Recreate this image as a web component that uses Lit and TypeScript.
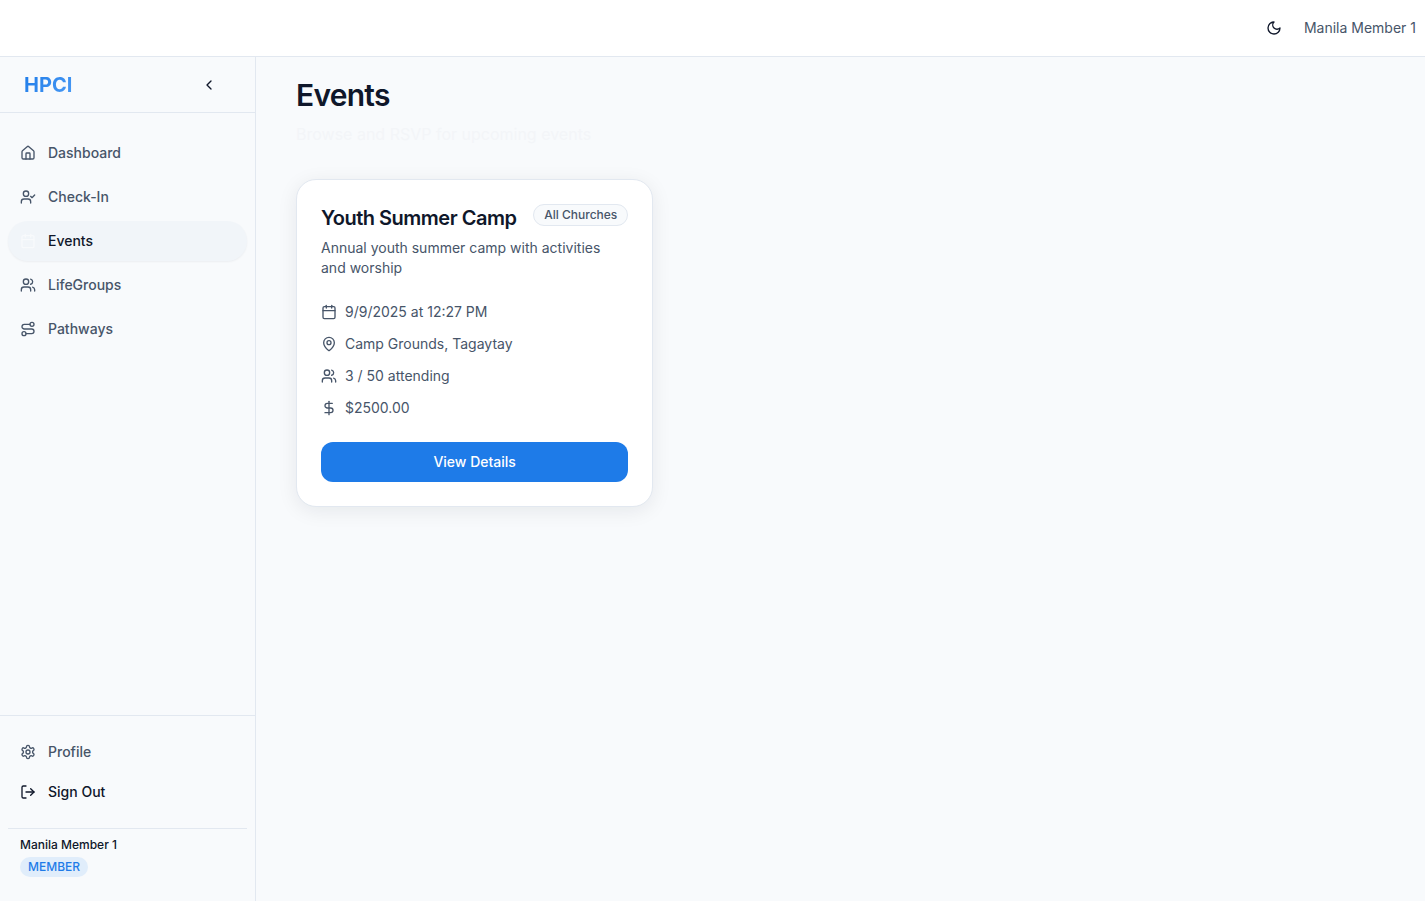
import { LitElement, html, css, svg } from "lit";
import { customElement, property, state } from "lit/decorators.js";

const icons: Record<string, unknown> = {
  house: svg`<path d="M15 21v-8a1 1 0 0 0-1-1h-4a1 1 0 0 0-1 1v8"/><path d="M3 10a2 2 0 0 1 .709-1.528l7-5.999a2 2 0 0 1 2.582 0l7 5.999A2 2 0 0 1 21 10v9a2 2 0 0 1-2 2H5a2 2 0 0 1-2-2z"/>`,
  userCheck: svg`<path d="m16 11 2 2 4-4"/><path d="M16 21v-2a4 4 0 0 0-4-4H6a4 4 0 0 0-4 4v2"/><circle cx="9" cy="7" r="4"/>`,
  calendar: svg`<path d="M8 2v4"/><path d="M16 2v4"/><rect width="18" height="18" x="3" y="4" rx="2"/><path d="M3 10h18"/>`,
  users: svg`<path d="M16 21v-2a4 4 0 0 0-4-4H6a4 4 0 0 0-4 4v2"/><circle cx="9" cy="7" r="4"/><path d="M22 21v-2a4 4 0 0 0-3-3.87"/><path d="M16 3.13a4 4 0 0 1 0 7.75"/>`,
  route: svg`<circle cx="6" cy="19" r="3"/><path d="M9 19h8.5a3.5 3.5 0 0 0 0-7h-11a3.5 3.5 0 0 1 0-7H15"/><circle cx="18" cy="5" r="3"/>`,
  settings: svg`<path d="M12.22 2h-.44a2 2 0 0 0-2 2v.18a2 2 0 0 1-1 1.73l-.43.25a2 2 0 0 1-2 0l-.15-.08a2 2 0 0 0-2.73.73l-.22.38a2 2 0 0 0 .73 2.73l.15.1a2 2 0 0 1 1 1.72v.51a2 2 0 0 1-1 1.74l-.15.09a2 2 0 0 0-.73 2.73l.22.38a2 2 0 0 0 2.73.73l.15-.08a2 2 0 0 1 2 0l.43.25a2 2 0 0 1 1 1.73V20a2 2 0 0 0 2 2h.44a2 2 0 0 0 2-2v-.18a2 2 0 0 1 1-1.73l.43-.25a2 2 0 0 1 2 0l.15.08a2 2 0 0 0 2.73-.73l.22-.39a2 2 0 0 0-.73-2.73l-.15-.08a2 2 0 0 1-1-1.74v-.5a2 2 0 0 1 1-1.74l.15-.09a2 2 0 0 0 .73-2.73l-.22-.38a2 2 0 0 0-2.73-.73l-.15.08a2 2 0 0 1-2 0l-.43-.25a2 2 0 0 1-1-1.73V4a2 2 0 0 0-2-2z"/><circle cx="12" cy="12" r="3"/>`,
  logOut: svg`<path d="m16 17 5-5-5-5"/><path d="M21 12H9"/><path d="M9 21H5a2 2 0 0 1-2-2V5a2 2 0 0 1 2-2h4"/>`,
  chevronLeft: svg`<path d="m15 18-6-6 6-6"/>`,
  moon: svg`<path d="M12 3a6 6 0 0 0 9 9 9 9 0 1 1-9-9Z"/>`,
  mapPin: svg`<path d="M20 10c0 4.993-5.539 10.193-7.399 11.799a1 1 0 0 1-1.202 0C9.539 20.193 4 14.993 4 10a8 8 0 0 1 16 0"/><circle cx="12" cy="10" r="3"/>`,
  dollar: svg`<path d="M12 2v20"/><path d="M17 5H9.5a3.5 3.5 0 0 0 0 7h5a3.5 3.5 0 0 1 0 7H6"/>`,
};

@customElement("ui-icon")
class UiIcon extends LitElement {
  @property() name = "";

  static styles = css`
    :host {
      display: block;
      flex: none;
      width: 16px;
      height: 16px;
    }
    .glyph {
      display: block;
      width: 100%;
      height: 100%;
      fill: none;
      stroke: currentColor;
      stroke-width: 2;
      stroke-linecap: round;
      stroke-linejoin: round;
    }
  `;

  render() {
    return html`<svg class="glyph" viewBox="0 0 24 24" aria-hidden="true">${icons[this.name]}</svg>`;
  }
}

interface ChurchEvent {
  title: string;
  scope: string;
  description: string;
  details: { icon: string; text: string }[];
}

@customElement("event-card")
class EventCard extends LitElement {
  @property({ attribute: false }) event!: ChurchEvent;

  static styles = css`
    :host {
      display: block;
    }
    .card {
      box-sizing: border-box;
      padding: 24px;
      background: #ffffff;
      border: 1px solid #e2e8f0;
      border-radius: 20px;
      box-shadow: 0 4px 20px rgba(15, 23, 42, 0.08);
      font-size: 14px;
      line-height: 20px;
      color: #475569;
    }
    .head {
      display: flex;
      justify-content: space-between;
      align-items: flex-start;
      gap: 8px;
    }
    .title {
      margin: 0;
      font-size: 20px;
      line-height: 28px;
      font-weight: 600;
      letter-spacing: -0.025em;
      color: #0f172a;
    }
    .scope {
      flex: none;
      padding: 2px 10px;
      font-size: 12px;
      line-height: 16px;
      font-weight: 500;
      background: #f8fafc;
      border: 1px solid #e2e8f0;
      border-radius: 11px;
    }
    .description {
      margin: 6px 0 24px;
    }
    .details {
      display: grid;
      gap: 12px;
      margin: 0 0 24px;
      padding: 0;
      list-style: none;
    }
    .detail {
      display: flex;
      align-items: center;
      gap: 8px;
    }
    .action {
      width: 100%;
      height: 40px;
      padding: 0 16px;
      border: 0;
      border-radius: 12px;
      background: #1e7be8;
      color: #ffffff;
      font: inherit;
      font-weight: 500;
      cursor: pointer;
    }
  `;

  render() {
    const { title, scope, description, details } = this.event;
    return html`
      <article class="card">
        <div class="head">
          <h2 class="title">${title}</h2>
          <span class="scope">${scope}</span>
        </div>
        <p class="description">${description}</p>
        <ul class="details">
          ${details.map(
            (d) => html`<li class="detail"><ui-icon name=${d.icon}></ui-icon><span>${d.text}</span></li>`
          )}
        </ul>
        <button class="action" type="button">View Details</button>
      </article>
    `;
  }
}

@customElement("app-root")
class AppRoot extends LitElement {
  @state() private current = "Events";

  private links = [
    { label: "Dashboard", icon: "house" },
    { label: "Check-In", icon: "userCheck" },
    { label: "Events", icon: "calendar" },
    { label: "LifeGroups", icon: "users" },
    { label: "Pathways", icon: "route" },
  ];

  private events: ChurchEvent[] = [
    {
      title: "Youth Summer Camp",
      scope: "All Churches",
      description: "Annual youth summer camp with activities and worship",
      details: [
        { icon: "calendar", text: "9/9/2025 at 12:27 PM" },
        { icon: "mapPin", text: "Camp Grounds, Tagaytay" },
        { icon: "users", text: "3 / 50 attending" },
        { icon: "dollar", text: "$2500.00" },
      ],
    },
  ];

  static styles = css`
    :host {
      display: flex;
      flex-direction: column;
      min-height: 100vh;
      background: #f8fafc;
      color: #0f172a;
      font-family: Inter, sans-serif;
      font-size: 14px;
      line-height: 20px;
    }
    .topbar {
      display: flex;
      justify-content: flex-end;
      align-items: center;
      gap: 8px;
      height: 56px;
      padding-right: 9px;
      background: #ffffff;
      border-bottom: 1px solid #e2e8f0;
      color: #475569;
    }
    .icon-button {
      display: grid;
      place-items: center;
      width: 44px;
      height: 40px;
      padding: 0;
      border: 0;
      background: none;
      color: #0f172a;
      cursor: pointer;
    }
    .body {
      flex: 1;
      display: flex;
    }
    .sidebar {
      box-sizing: border-box;
      flex: none;
      display: flex;
      flex-direction: column;
      width: 256px;
      border-right: 1px solid #e2e8f0;
    }
    .brand-row {
      display: flex;
      justify-content: space-between;
      align-items: center;
      height: 55px;
      padding: 0 24px;
      border-bottom: 1px solid #e2e8f0;
    }
    .brand {
      font-size: 20px;
      line-height: 28px;
      font-weight: 700;
      background: linear-gradient(135deg, #1e7be8, #4b9bf5);
      background-clip: text;
      -webkit-background-clip: text;
      color: transparent;
    }
    .nav {
      flex: 1;
      display: flex;
      flex-direction: column;
      gap: 4px;
      padding: 20px 8px;
    }
    .item {
      display: flex;
      align-items: center;
      gap: 12px;
      height: 40px;
      padding: 0 12px;
      border: 0;
      border-radius: 20px;
      background: none;
      color: #475569;
      font: inherit;
      font-weight: 500;
      text-decoration: none;
      cursor: pointer;
    }
    .item.active {
      background: #f1f5f9;
      color: #0f172a;
      box-shadow: 0 1px 2px rgba(15, 23, 42, 0.05);
    }
    .item.active ui-icon {
      color: #f8fafc;
    }
    .item.strong {
      color: #0f172a;
    }
    .foot {
      display: flex;
      flex-direction: column;
      padding: 16px 8px 24px;
      border-top: 1px solid #e2e8f0;
    }
    .account {
      display: flex;
      flex-direction: column;
      align-items: flex-start;
      gap: 4px;
      margin-top: 16px;
      padding: 8px 12px 0;
      border-top: 1px solid #e2e8f0;
      font-size: 12px;
      line-height: 16px;
      font-weight: 500;
    }
    .role {
      padding: 2px 8px;
      border-radius: 10px;
      background: #e0edfb;
      color: #1e7be8;
    }
    .content {
      flex: 1;
      min-width: 0;
      padding: 20px 9px 20px 40px;
    }
    .heading {
      margin: 0;
      font-size: 30px;
      line-height: 36px;
      font-weight: 600;
      letter-spacing: -0.025em;
    }
    .lead {
      margin: 8px 0 32px;
      font-size: 16px;
      line-height: 26px;
      color: #f3f5f8;
    }
    .grid {
      display: grid;
      grid-template-columns: repeat(3, minmax(0, 1fr));
      gap: 24px;
    }
  `;

  private select(e: Event, label: string) {
    e.preventDefault();
    this.current = label;
  }

  render() {
    return html`
      <header class="topbar">
        <button class="icon-button" type="button" aria-label="Toggle theme"><ui-icon name="moon"></ui-icon></button>
        <span>Manila Member 1</span>
      </header>
      <div class="body">
        <aside class="sidebar">
          <div class="brand-row">
            <span class="brand">HPCI</span>
            <button class="icon-button" type="button" aria-label="Collapse sidebar">
              <ui-icon name="chevronLeft"></ui-icon>
            </button>
          </div>
          <nav class="nav">
            ${this.links.map(
              (l) => html`<a
                class="item ${l.label === this.current ? "active" : ""}"
                href="#"
                @click=${(e: Event) => this.select(e, l.label)}
                ><ui-icon name=${l.icon}></ui-icon>${l.label}</a
              >`
            )}
          </nav>
          <div class="foot">
            <a class="item" href="#"><ui-icon name="settings"></ui-icon>Profile</a>
            <button class="item strong" type="button"><ui-icon name="logOut"></ui-icon>Sign Out</button>
            <div class="account">
              <span>Manila Member 1</span>
              <span class="role">MEMBER</span>
            </div>
          </div>
        </aside>
        <main class="content">
          <h1 class="heading">Events</h1>
          <p class="lead">Browse and RSVP for upcoming events</p>
          <div class="grid">${this.events.map((ev) => html`<event-card .event=${ev}></event-card>`)}</div>
        </main>
      </div>
    `;
  }
}
